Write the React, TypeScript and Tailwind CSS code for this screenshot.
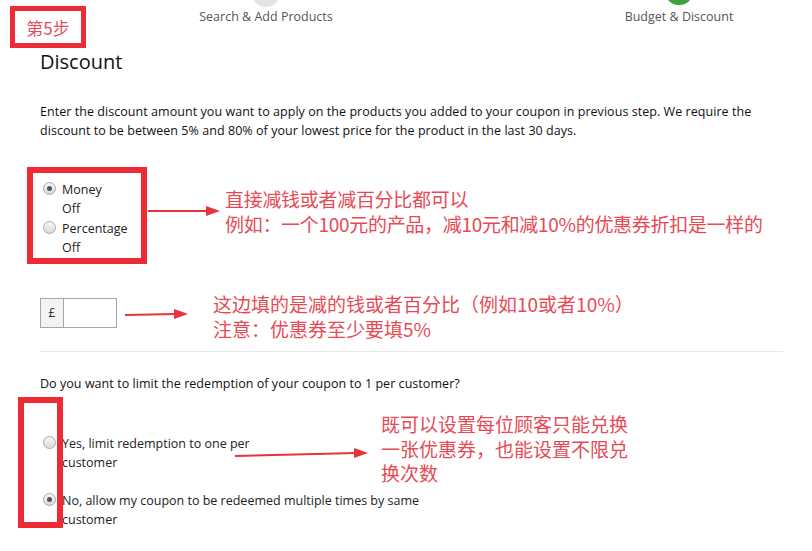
import React from 'react';

const sans = "font-['Open_Sans','Liberation_Sans',sans-serif]";
const cjk = "font-['Noto_Sans_CJK_SC','Noto_Sans_CJK_TC',sans-serif]";

const Radio = ({ checked }: { checked?: boolean }) => (
  <span className="mt-[3px] ml-[3px] flex h-[13px] w-[13px] shrink-0 items-center justify-center rounded-full border border-[#a9a9a9] bg-gradient-to-b from-[#f7f7f7] to-[#d9d9d9]">
    {checked && <span className="h-[5px] w-[5px] rounded-full bg-[#555]"></span>}
  </span>
);

const Arrow = ({ x, y, w, tilt = 0 }: { x: number; y: number; w: number; tilt?: number }) => (
  <svg className="absolute" style={{ left: x, top: y - 8 }} width={w} height={16} viewBox={`0 0 ${w} 16`}>
    <line x1={0} y1={8 + tilt} x2={w - 12} y2={8} stroke="#e8323c" strokeWidth={2} />
    <polygon points={`${w - 14},3 ${w},8 ${w - 14},13`} fill="#e8323c" />
  </svg>
);

export default function App() {
  return (
    <div className={`relative h-[551px] w-[812px] overflow-hidden bg-white ${sans}`}>
      {/* step header */}
      <div className="flex h-[26px] gap-[207px] pl-[163px]">
        <div className="flex w-[206px] flex-col items-center">
          <div className="-mt-[20px] h-[28px] w-[28px] rounded-full bg-[#e4e4e4]"></div>
          <span className="mt-[1px] text-[12.5px] leading-[18px] text-[#555]">Search &amp; Add Products</span>
        </div>
        <div className="flex w-[206px] flex-col items-center">
          <div className="-mt-[22px] h-[28px] w-[28px] rounded-full bg-[#3fa142]"></div>
          <span className="mt-[3px] text-[12.5px] leading-[18px] text-[#555]">Budget &amp; Discount</span>
        </div>
      </div>

      <div className="pl-[40px] pr-[29px] text-[#111]">
        <h2 className="mt-[22px] text-[20px] leading-[28px]">Discount</h2>

        <p className="mt-[26px] text-[12.5px] leading-[19px] tracking-[0.05px] whitespace-nowrap">
          Enter the discount amount you want to apply on the products you added to your coupon in previous step. We require the
          <br />
          discount to be between 5% and 80% of your lowest price for the product in the last 30 days.
        </p>

        <div className="mt-[39px] flex flex-col text-[12.5px] leading-[19px] text-[#222]">
          <label className="flex gap-[6px]">
            <Radio checked />
            <span className="pt-[1px]">Money<br />Off</span>
          </label>
          <label className="flex gap-[6px]">
            <Radio />
            <span className="pt-[1px]">Percentage<br />Off</span>
          </label>
        </div>

        <div className="mt-[41px] flex h-[30px] w-[77px] border border-[#a6a6a6] text-[12px]">
          <span className="flex w-[23px] items-center justify-center border-r border-[#a6a6a6] bg-[#f3f3f3] text-[#333]">£</span>
          <span className="flex-1 bg-white"></span>
        </div>

        <div className="mt-[23px] border-t border-[#e7e7e7]"></div>

        <p className="mt-[22px] text-[12.5px] leading-[19px] tracking-[0.05px]">
          Do you want to limit the redemption of your coupon to 1 per customer?
        </p>

        <div className="mt-[40px] flex flex-col gap-[18px] text-[12.5px] leading-[19px] text-[#222]">
          <label className="flex gap-[6px]">
            <Radio />
            <span className="pt-[1px]">Yes, limit redemption to one per<br />customer</span>
          </label>
          <label className="flex gap-[6px]">
            <Radio checked />
            <span className="pt-[1px]">No, allow my coupon to be redeemed multiple times by same<br />customer</span>
          </label>
        </div>
      </div>

      {/* annotations */}
      <div className="absolute left-[10px] top-[6px] flex h-[42px] w-[76px] items-center justify-center border-[5px] border-[#ee2b35] bg-white">
        <span className={`${cjk} text-[17px] leading-none text-[#e0505a]`}>第5步</span>
      </div>

      <div className="absolute left-[27px] top-[167px] h-[97px] w-[120px] border-[6px] border-[#ee2b35]"></div>
      <Arrow x={148} y={211} w={72} />
      <div className={`absolute left-[225px] top-[186px] text-[19px] leading-[25px] tracking-[-0.3px] text-[#e84a55] ${cjk}`}>
        直接减钱或者减百分比都可以
        <br />
        例如：一个100元的产品，减10元和减10%的优惠券折扣是一样的
      </div>

      <Arrow x={125} y={314} w={63} tilt={1} />
      <div className={`absolute left-[213px] top-[291px] text-[19px] leading-[25px] text-[#e84a55] ${cjk}`}>
        这边填的是减的钱或者百分比（例如10或者10%）
        <br />
        注意：优惠券至少要填5%
      </div>

      <div className="absolute left-[18px] top-[397px] h-[131px] w-[45px] border-[6px] border-[#ee2b35]"></div>
      <Arrow x={235} y={453} w={133} tilt={3} />
      <div className={`absolute left-[381px] top-[412px] text-[19px] leading-[24.5px] text-[#e84a55] ${cjk}`}>
        既可以设置每位顾客只能兑换
        <br />
        一张优惠券，也能设置不限兑
        <br />
        换次数
      </div>
    </div>
  );
}
